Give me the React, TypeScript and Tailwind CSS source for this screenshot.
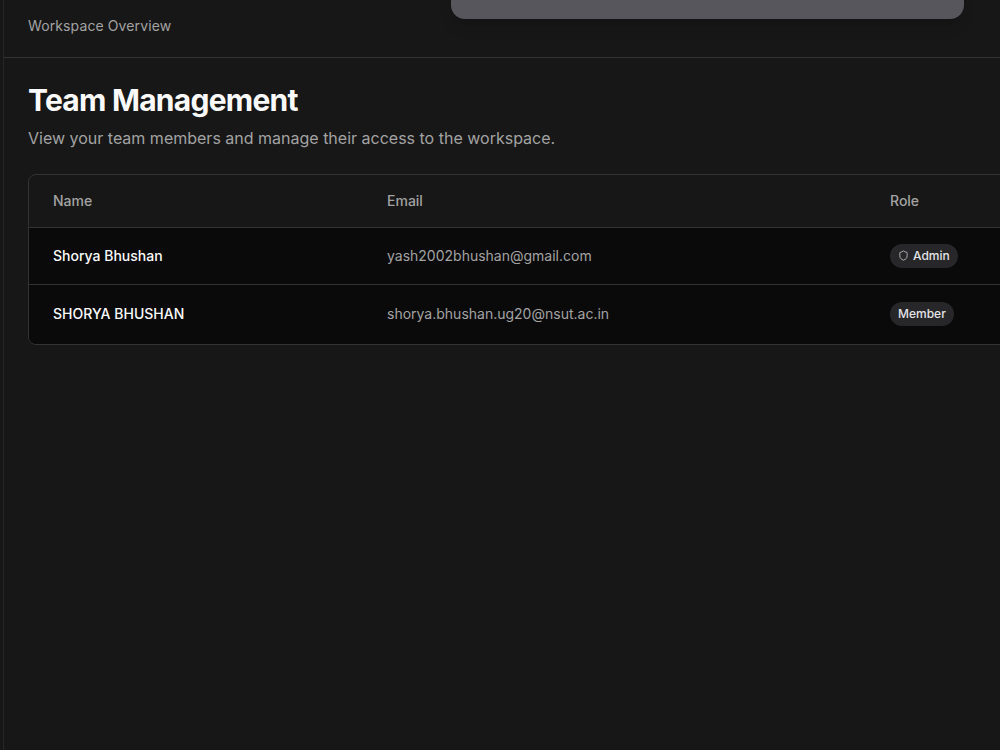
import { Shield } from 'lucide-react';

const members = [
  { name: 'Shorya Bhushan', email: 'yash2002bhushan@gmail.com', role: 'Admin', rowHeight: 'h-[57px]' },
  { name: 'SHORYA BHUSHAN', email: 'shorya.bhushan.ug20@nsut.ac.in', role: 'Member', rowHeight: 'h-[60px]' },
];

function RoleBadge({ role }: { role: string }) {
  return (
    <span className="inline-flex h-6 items-center gap-1 rounded-full bg-[#27272a] px-2 text-xs font-medium leading-none text-[#e4e4e7]">
      {role === 'Admin' && <Shield className="h-[11px] w-[11px]" strokeWidth={1.5} />}
      {role}
    </span>
  );
}

export default function App() {
  return (
    <div className="relative h-[750px] w-[1000px] overflow-hidden bg-[#171717] font-['Inter',sans-serif]">
      <div className="ml-[3px] h-full border-l border-[#262626]">
        {/* Top bar */}
        <header className="flex h-[58px] items-start border-b border-[#333333] pl-6 pt-[16px]">
          <span className="text-sm leading-5 tracking-[0.11px] text-[#a3a3a3]">Workspace Overview</span>
        </header>

        {/* Dialog poking in from above */}
        <div className="absolute left-[451px] top-[-40px] h-[59px] w-[513px] rounded-[14px] bg-[#57565c] shadow-lg" />

        <main className="pl-6 pt-[22px]">
          <h1 className="text-3xl font-bold leading-10 tracking-tight text-[#fafafa]">Team Management</h1>
          <p className="mt-[6px] text-base leading-6 text-[#a3a3a3]">
            View your team members and manage their access to the workspace.
          </p>

          <div className="mt-6 w-[1100px] overflow-hidden rounded-lg border border-[#333333]">
            <table className="w-full table-fixed border-collapse text-sm">
              <thead>
                <tr className="h-[52px] border-b border-[#333333] text-left text-[#a3a3a3]">
                  <th className="w-[334px] pl-6 font-medium">Name</th>
                  <th className="w-[503px] pl-6 font-medium">Email</th>
                  <th className="pl-6 font-medium">Role</th>
                </tr>
              </thead>
              <tbody className="bg-[#0a0a0a]">
                {members.map((m, i) => (
                  <tr key={m.email} className={`${m.rowHeight} ${i === 0 ? 'border-b border-[#333333]' : ''}`}>
                    <td className="pl-6 font-medium text-[#fafafa]">{m.name}</td>
                    <td className="pl-6 text-[#a3a3a3]">{m.email}</td>
                    <td className="pl-6">
                      <RoleBadge role={m.role} />
                    </td>
                  </tr>
                ))}
              </tbody>
            </table>
          </div>
        </main>
      </div>
    </div>
  );
}
